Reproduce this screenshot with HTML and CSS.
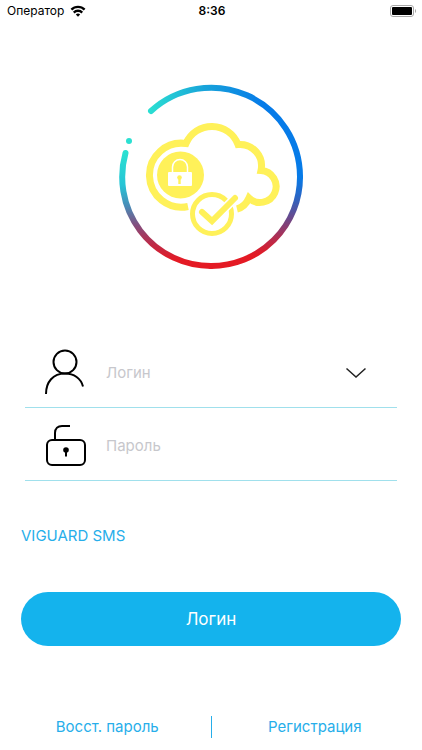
FILE: index.html
```html
<!DOCTYPE html>
<html lang="ru">
<head>
    <meta charset="UTF-8">
    <meta name="viewport" content="width=device-width, initial-scale=1.0">
    <title>Логин</title>
    <link rel="stylesheet" href="styles.css">
</head>
<body>
    <header class="status">
        <div class="carrier">
            <span>Оператор</span>
            <svg class="wifi" width="16" height="12" viewBox="0 0 16 12" fill="none" stroke="#000" stroke-width="2.4">
                <path d="M1.4 4.6a9.3 9.3 0 0 1 13.2 0"/>
                <path d="M3.800 7.600a5.8 5.8 0 0 1 8.400 0"/>
                <path d="M8 11.8 5.8 9.5a3.2 3.2 0 0 1 4.4 0z" fill="#000" stroke="none"/>
            </svg>
        </div>
        <time class="clock">8:36</time>
        <svg class="battery" width="27" height="12" viewBox="0 0 27 12">
            <rect x="0.5" y="0.5" width="23" height="11" rx="2.5" fill="#fff" stroke="#a8a8a8"/>
            <rect x="2" y="2" width="20" height="8" rx="1" fill="#000"/>
            <path d="M25 4v4a2.4 2.4 0 0 0 0-4z" fill="#a8a8a8"/>
        </svg>
    </header>

    <main class="login">
        <svg class="logo" width="200" height="200" viewBox="111 77 200 200" fill="none">
            <defs>
                <linearGradient id="ringTop" gradientUnits="userSpaceOnUse" x1="148" y1="0" x2="262" y2="0">
                    <stop offset="0" stop-color="#2be0d2"/>
                    <stop offset="0.5" stop-color="#18a3da"/>
                    <stop offset="1" stop-color="#067be8"/>
                </linearGradient>
                <linearGradient id="ringRight" gradientUnits="userSpaceOnUse" x1="0" y1="177" x2="0" y2="255">
                    <stop offset="0" stop-color="#067be8"/>
                    <stop offset="0.25" stop-color="#2866c6"/>
                    <stop offset="0.55" stop-color="#704686"/>
                    <stop offset="0.8" stop-color="#b82b4c"/>
                    <stop offset="1" stop-color="#e41a24"/>
                </linearGradient>
                <linearGradient id="ringLeft" gradientUnits="userSpaceOnUse" x1="0" y1="153" x2="0" y2="260">
                    <stop offset="0" stop-color="#2be0d2"/>
                    <stop offset="0.3" stop-color="#26c4d6"/>
                    <stop offset="0.5" stop-color="#4a8ab6"/>
                    <stop offset="0.68" stop-color="#854c7c"/>
                    <stop offset="0.85" stop-color="#bd2b48"/>
                    <stop offset="1" stop-color="#e41a24"/>
                </linearGradient>
            </defs>

            <!-- ring -->
            <g stroke-width="6" stroke-linecap="round">
                <path d="M151 111A89 89 0 0 1 300 177" stroke="url(#ringTop)"/>
                <path d="M211 266A89 89 0 0 1 125.5 153" stroke="url(#ringLeft)"/>
                <path d="M300 177A89 89 0 0 1 211 266" stroke="url(#ringRight)"/>
            </g>
            <circle cx="129" cy="141" r="3" fill="#2be0d2"/>

            <!-- cloud -->
            <path d="M188 206.5A32 32 0 1 1 186 143.500A28 28 0 0 1 238 144.500A21.5 21.5 0 0 1 261 170.500A16 16 0 1 1 249 198Q245 207 237 209" stroke="#fff159" stroke-width="7"/>

            <!-- padlock -->
            <circle cx="180.500" cy="175" r="23.5" fill="#fff159"/>
            <path d="M172.500 173v-6a7.5 7.5 0 0 1 15 0v6" stroke="#fff" stroke-width="1.5"/>
            <rect x="168" y="172" width="24" height="14" rx="1" fill="#fff"/>
            <circle cx="179.500" cy="177.5" r="2.3" fill="#fff159"/>
            <path d="M179.500 178v6" stroke="#fff159" stroke-width="2.4"/>

            <!-- check mark -->
            <circle cx="212" cy="214" r="19.5" stroke="#fff159" stroke-width="5"/>
            <path d="M202 212l10 9 23-23" stroke="#fff" stroke-width="9"/>
            <path d="M202 212l10 9 23-23" stroke="#fff159" stroke-width="6" stroke-linecap="round"/>
        </svg>

        <form class="form">
            <div class="field">
                <label for="login">
                    <svg width="42" height="48" viewBox="0 0 42 48" role="img" aria-label="Логин" fill="none" stroke="#000" stroke-width="2">
                        <circle cx="20" cy="13" r="11.5"/>
                        <path d="M1 45c0-12 7-20.5 19-20.5 9 0 16 5 18 13"/>
                    </svg>
                </label>
                <input type="text" id="login" name="login" placeholder="Логин">
                <button type="button" class="toggle" aria-label="Логин">
                    <svg width="22" height="12" viewBox="0 0 22 12" fill="none" stroke="#222" stroke-width="1.5">
                        <path d="M1.5 1.5 11 10l9.5-8.5"/>
                    </svg>
                </button>
            </div>
            <div class="field">
                <label for="password">
                    <svg width="42" height="42" viewBox="0 0 42 42" role="img" aria-label="Пароль" fill="none" stroke="#000" stroke-width="2">
                        <rect x="2" y="15" width="38" height="25" rx="5"/>
                        <path d="M10 15V8C10 3.500 13 1 17 1h8"/>
                        <circle cx="21" cy="25" r="2.8" fill="#000" stroke="none"/>
                        <path d="M21 25v6.5"/>
                    </svg>
                </label>
                <input type="password" id="password" name="password" placeholder="Пароль">
            </div>
            <a class="sms" href="#">VIGUARD SMS</a>
            <button type="submit" class="submit">Логин</button>
        </form>

        <nav class="links">
            <a href="#">Восст. пароль</a>
            <a href="#">Регистрация</a>
        </nav>
    </main>
</body>
</html>
```
FILE: styles.css
```css
* {
    box-sizing: border-box;
}
body {
    margin: 0;
    background-color: #fff;
    color: #000;
    font-family: Inter, "Liberation Sans", sans-serif;
    font-size: 15px;
    line-height: 20px;
}
a {
    color: #27aeea;
    text-decoration: none;
}
.status {
    display: grid;
    grid-template-columns: 1fr auto 1fr;
    align-items: center;
    height: 22px;
    padding: 0 5px 0 7px;
    font-size: 12px;
}
.carrier {
    display: flex;
    align-items: center;
    gap: 6px;
}
.clock {
    font-weight: 600;
}
.battery {
    justify-self: end;
}
.login {
    display: flex;
    flex-direction: column;
    padding: 55px 21px 0;
}
.logo {
    align-self: center;
}
.form {
    display: flex;
    flex-direction: column;
    margin-top: 58px;
}
.field {
    display: flex;
    align-items: center;
    height: 73px;
    margin: 0 4px;
    padding: 4px 30px 0 20px;
    border-bottom: 1px solid #a0e0ec;
}
.field label {
    display: flex;
    width: 61px;
}
.field input {
    flex: 1;
    min-width: 0;
    padding: 0;
    border: none;
    outline: none;
    background: none;
    font: inherit;
}
.field input::placeholder {
    color: #c7c7cc;
}
.toggle {
    display: flex;
    padding: 0;
    border: none;
    background: none;
    cursor: pointer;
}
.sms {
    align-self: flex-start;
    margin-top: 45px;
}
.submit {
    height: 54px;
    margin-top: 46px;
    border: none;
    border-radius: 27px;
    background-color: #14b3ed;
    color: #fff;
    font-family: inherit;
    font-size: 17px;
    cursor: pointer;
}
.links {
    display: flex;
    margin: 70px -17px 0;
}
.links a {
    flex: 1;
    text-align: center;
    line-height: 22px;
}
.links a + a {
    border-left: 1px solid #27aeea;
}
```
